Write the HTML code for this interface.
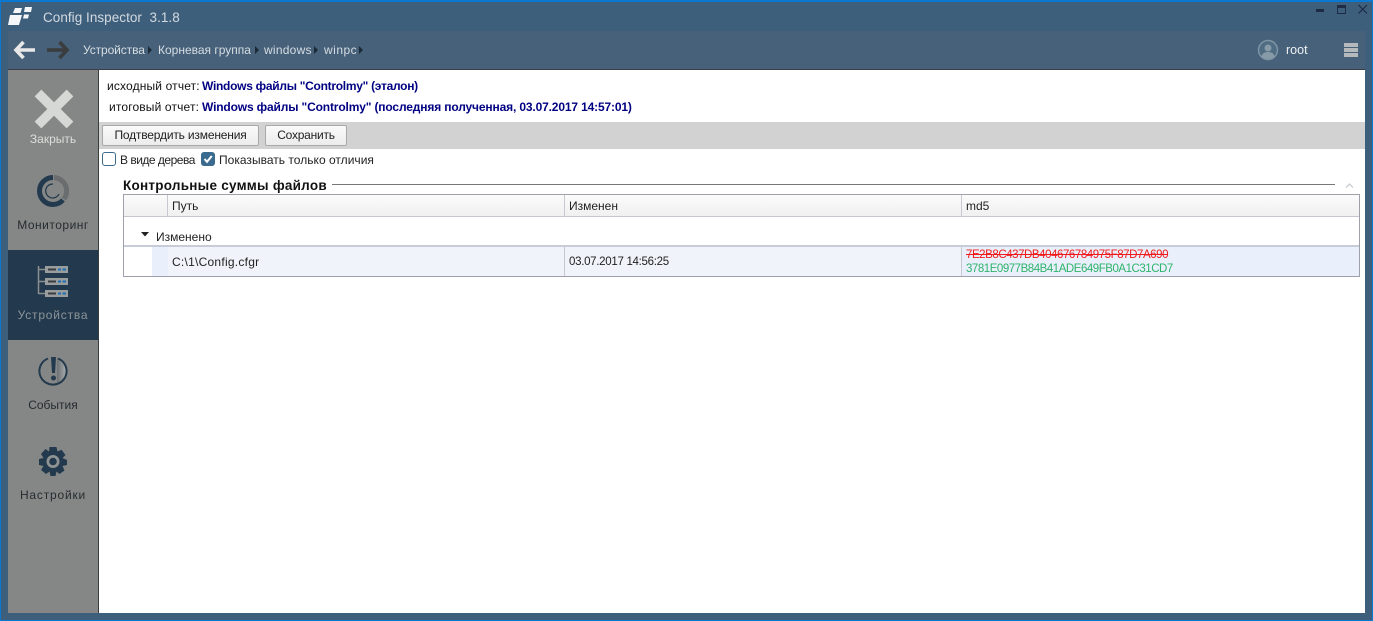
<!DOCTYPE html>
<html><head><meta charset="utf-8">
<style>
html,body{margin:0;padding:0}
body{width:1373px;height:621px;position:relative;overflow:hidden;background:#3e5f7c;font-family:"Liberation Sans","DejaVu Sans",sans-serif;font-size:12px;color:#222}
div,span.a{position:absolute;white-space:nowrap}
.lbl{width:90px;left:8px;text-align:center;font-size:12px;line-height:14px}
.btn{height:19px;top:125px;box-sizing:content-box;border:1px solid #a9a9a9;border-radius:2px;background:linear-gradient(#fafafa,#ececec);text-align:center;line-height:19px;color:#222}
.b{font-weight:bold;color:#000082}
.hd{top:196px;height:21px;line-height:21px;color:#222}
.sep{width:1px;background:#c8c8d0}
</style></head><body>
<div style="left:0;top:0;width:1373px;height:2px;background:#0a78cf"></div>
<div style="left:0;top:0;width:1px;height:621px;background:#0a78cf"></div>
<div style="left:0;top:620px;width:1373px;height:1px;background:#0a78cf"></div>
<div style="left:1372px;top:0;width:1px;height:621px;background:#0a78cf"></div>

<svg style="position:absolute;left:7px;top:5px" width="26" height="22" viewBox="0 0 26 22"><path d="M3 10H15L12 20H1Z M17 9.500H22L21 13.500H16Z M8 3H15L13.500 8H6Z M18 2H25L24 7H17Z" fill="#f4f6f8"/></svg>
<div style="left:43px;top:9px;font-size:13.500px;line-height:18px;color:#d3dae0;letter-spacing:.04px">Config Inspector&nbsp; 3.1.8</div>

<div style="left:1316px;top:9px;width:8px;height:3px;background:#1d2b45"></div>
<div style="left:1337px;top:5px;width:7px;height:5px;border:1px solid #1d2b45;border-top:3px solid #1d2b45"></div>
<svg style="position:absolute;left:1358px;top:4px" width="12" height="12" viewBox="0 0 12 12"><path d="M.5 1L9 9.500M9 1L.5 9.500" stroke="#1d2b45" stroke-width="1.200"/></svg>

<div style="left:8px;top:31px;width:1357px;height:38px;background:#466179"></div>
<div style="left:8px;top:69px;width:1357px;height:1px;background:#3a3f44"></div>

<svg style="position:absolute;left:13px;top:40px" width="24" height="20" viewBox="0 0 24 20"><path d="M10.500 2L3 10L10.500 18M3.500 10H22" fill="none" stroke="#e8e8e8" stroke-width="3.600"/></svg>
<svg style="position:absolute;left:46px;top:40px" width="24" height="20" viewBox="0 0 24 20"><path d="M13.500 2L21 10L13.500 18M1 10H20.500" fill="none" stroke="#3a3c3e" stroke-width="3.600"/></svg>

<div style="left:83px;top:43px;line-height:14px;color:#d6dde3;letter-spacing:-.1px">Устройства</div>
<svg style="position:absolute;left:148px;top:46px" width="5" height="8"><path d="M0 0L4 4L0 8Z" fill="#1c2a38"/></svg>
<div style="left:158px;top:43px;line-height:14px;color:#d6dde3">Корневая группа</div>
<svg style="position:absolute;left:255px;top:46px" width="5" height="8"><path d="M0 0L4 4L0 8Z" fill="#1c2a38"/></svg>
<div style="left:264px;top:43px;line-height:14px;color:#d6dde3;letter-spacing:.25px">windows</div>
<svg style="position:absolute;left:314px;top:46px" width="5" height="8"><path d="M0 0L4 4L0 8Z" fill="#1c2a38"/></svg>
<div style="left:324px;top:43px;line-height:14px;color:#d6dde3;letter-spacing:.5px">winpc</div>
<svg style="position:absolute;left:359px;top:46px" width="5" height="8"><path d="M0 0L4 4L0 8Z" fill="#1c2a38"/></svg>

<svg style="position:absolute;left:1257px;top:39px" width="22" height="22" viewBox="0 0 22 22"><circle cx="11" cy="11" r="9.500" fill="#4f6c83" stroke="#7d93a3" stroke-width="1.500"/><circle cx="11" cy="9" r="3.500" fill="#869aa8"/><path d="M4.500 18C5 14 8 13 11 13S17 14 17.500 18Q11 22 4.500 18Z" fill="#869aa8"/></svg>
<div style="left:1286px;top:43px;line-height:14px;color:#eef1f3;font-size:12.500px">root</div>
<div style="left:1344px;top:43px;width:14px;height:4px;background:#b5b9bb"></div>
<div style="left:1344px;top:48px;width:14px;height:4px;background:#b5b9bb"></div>
<div style="left:1344px;top:53px;width:14px;height:4px;background:#b5b9bb"></div>

<div style="left:8px;top:70px;width:90px;height:543px;background:#848785"></div>
<div style="left:98px;top:70px;width:1px;height:543px;background:#3a3d40"></div>
<div style="left:8px;top:250px;width:90px;height:90px;background:#233a4e"></div>

<svg style="position:absolute;left:33px;top:88px" width="42" height="42" viewBox="0 0 42 42"><path d="M5 5L37 37M37 5L5 37" stroke="#d6d8d6" stroke-width="9.500"/></svg>
<div class="lbl" style="top:132px;color:#dcdedc">Закрыть</div>

<svg style="position:absolute;left:37px;top:175px" width="32" height="32" viewBox="0 0 32 32"><path d="M16 2.500A13.500 13.500 0 0 0 16 29.500A13.500 13.500 0 0 0 26 25" fill="none" stroke="#233a4e" stroke-width="5"/><path d="M17 2.500A13.500 13.500 0 0 1 27 24" fill="none" stroke="#6a6d6d" stroke-width="5"/><path d="M16 9A7 7 0 1 0 22 19" fill="none" stroke="#233a4e" stroke-width="1.200"/></svg>
<div class="lbl" style="top:218px;color:#262c30;letter-spacing:.5px">Мониторинг</div>

<svg style="position:absolute;left:37px;top:265px" width="32" height="32" viewBox="0 0 32 32"><path d="M1.500 1V29M1.500 4.500H8M1.500 16.500H8M1.500 28.500H8" stroke="#8b8e8e" stroke-width="1.500" fill="none"/><rect x="8" y="1" width="23" height="7" fill="#9a9d9d"/><rect x="8" y="13" width="23" height="7" fill="#9a9d9d"/><rect x="8" y="25" width="23" height="7" fill="#9a9d9d"/><path d="M11 4.500H19M11 16.500H19M11 28.500H19" stroke="#3a3d3f" stroke-width="2"/><path d="M21 4.500H24M25.500 4.500H29M21 16.500H24M25.500 16.500H29M21 28.500H24M25.500 28.500H29" stroke="#1c6fb5" stroke-width="2"/></svg>
<div class="lbl" style="top:308px;color:#8e9498;letter-spacing:.8px">Устройства</div>

<svg style="position:absolute;left:37px;top:355px" width="32" height="32" viewBox="0 0 32 32"><defs><linearGradient id="g" x1="0" x2="1"><stop offset="0" stop-color="#6c7072"/><stop offset="1" stop-color="#a9acac"/></linearGradient></defs><path d="M20 3A13.800 13.800 0 0 1 20 29Z" fill="url(#g)"/><path d="M11 3.500A13.500 13.500 0 0 0 12 29A14 14 0 0 0 20 29A13.500 13.500 0 0 0 21 3.500" fill="none" stroke="#233a4e" stroke-width="2"/><path d="M14 2H19L18 18H15Z" fill="#233a4e"/><circle cx="16.500" cy="23" r="2.500" fill="#233a4e"/></svg>
<div class="lbl" style="top:398px;color:#262c30">События</div>

<svg style="position:absolute;left:37px;top:445px" width="32" height="32" viewBox="0 0 32 32"><path d="M12.500 2H19.500L20.500 6.500L24.500 4.800L28.500 10L25.500 13L30 15V20L25.500 21L27.500 25.500L22.500 29L19.500 26.500L18.500 31H13.500L12.500 26.500L9 29L4 25L6.500 21L2 20V14L6.500 13L4 9L8.500 4L12 6.500Z" fill="#233a4e"/><circle cx="16" cy="16.500" r="6.500" fill="#8f9393"/><circle cx="16" cy="16.500" r="3.800" fill="#233a4e"/></svg>
<div class="lbl" style="top:488px;color:#262c30;letter-spacing:.8px">Настройки</div>

<div style="left:99px;top:70px;width:1266px;height:543px;background:#fff"></div>

<div style="left:107px;top:79px;line-height:14px;color:#111;letter-spacing:.15px">исходный отчет:</div>
<div class="b" style="left:202px;top:79px;line-height:14px;letter-spacing:-.28px">Windows файлы "Controlmy" (эталон)</div>
<div style="left:109px;top:100px;line-height:14px;color:#111;letter-spacing:.15px">итоговый отчет:</div>
<div class="b" style="left:202px;top:100px;line-height:14px;letter-spacing:-.15px">Windows файлы "Controlmy" (последняя полученная, 03.07.2017 14:57:01)</div>

<div style="left:99px;top:122px;width:1266px;height:27px;background:#d2d2d2"></div>
<div class="btn" style="left:102px;width:155px;letter-spacing:-.18px">Подтвердить изменения</div>
<div class="btn" style="left:265px;width:80px;letter-spacing:-.24px">Сохранить</div>

<div style="left:102px;top:152px;width:12px;height:12px;border:1px solid #3e6b8c;border-radius:3px;background:#fff"></div>
<div style="left:120px;top:153px;line-height:14px;letter-spacing:-.5px">В виде дерева</div>
<div style="left:201px;top:152px;width:14px;height:14px;border-radius:3px;background:#3a6a8e"></div>
<svg style="position:absolute;left:201px;top:152px" width="14" height="14"><path d="M3.500 7L6 9.800L10.800 4" fill="none" stroke="#fff" stroke-width="2"/></svg>
<div style="left:219px;top:153px;line-height:14px;letter-spacing:.02px">Показывать только отличия</div>

<div style="left:123px;top:178px;font-weight:bold;font-size:13.500px;line-height:15px;color:#111;letter-spacing:.25px">Контрольные суммы файлов</div>
<div style="left:332px;top:184px;width:1003px;height:1px;background:#777"></div>
<svg style="position:absolute;left:1345px;top:182px" width="10" height="7"><path d="M1 5.500L4.500 2L8 5.500" fill="none" stroke="#c4c8cc" stroke-width="1.200"/></svg>

<div style="left:123px;top:194px;width:1235px;height:81px;border:1px solid #a0a0ac;background:#fff"></div>
<div style="left:124px;top:195px;width:1235px;height:21px;background:linear-gradient(#fbfbfb,#f0f0f0)"></div>
<div style="left:124px;top:216px;width:1235px;height:1px;background:#c6c6d0"></div>
<div class="sep" style="left:167px;top:195px;height:21px"></div>
<div class="sep" style="left:564px;top:195px;height:21px"></div>
<div class="sep" style="left:961px;top:195px;height:21px"></div>
<div class="hd" style="left:172px">Путь</div>
<div class="hd" style="left:569px">Изменен</div>
<div class="hd" style="left:966px">md5</div>

<svg style="position:absolute;left:141px;top:232px" width="9" height="6"><path d="M0 0H8L4 4.500Z" fill="#222"/></svg>
<div style="left:156px;top:230px;line-height:14px">Изменено</div>
<div style="left:124px;top:245px;width:1235px;height:2px;background:#c8ccd8"></div>
<div style="left:152px;top:247px;width:1207px;height:29px;background:#e9f0fb"></div>
<div style="left:168px;top:247px;width:396px;height:29px;background:#f0f3f9"></div>
<div style="left:565px;top:247px;width:396px;height:29px;background:#f0f3f9"></div>
<div class="sep" style="left:564px;top:247px;height:29px"></div>
<div class="sep" style="left:961px;top:247px;height:29px"></div>
<div style="left:172px;top:255px;line-height:14px;letter-spacing:.25px">C:\1\Config.cfgr</div>
<div style="left:569px;top:255px;line-height:14px;font-size:11.500px;letter-spacing:-.3px">03.07.2017 14:56:25</div>
<div style="left:966px;top:248px;line-height:14px;font-size:11.500px;color:#f01c1c;text-decoration:line-through;letter-spacing:-.44px">7E2B8C437DB404676784975F87D7A690</div>
<div style="left:966px;top:262px;line-height:14px;font-size:11.500px;color:#2fb36b;letter-spacing:-.47px">3781E0977B84B41ADE649FB0A1C31CD7</div>
</body></html>
